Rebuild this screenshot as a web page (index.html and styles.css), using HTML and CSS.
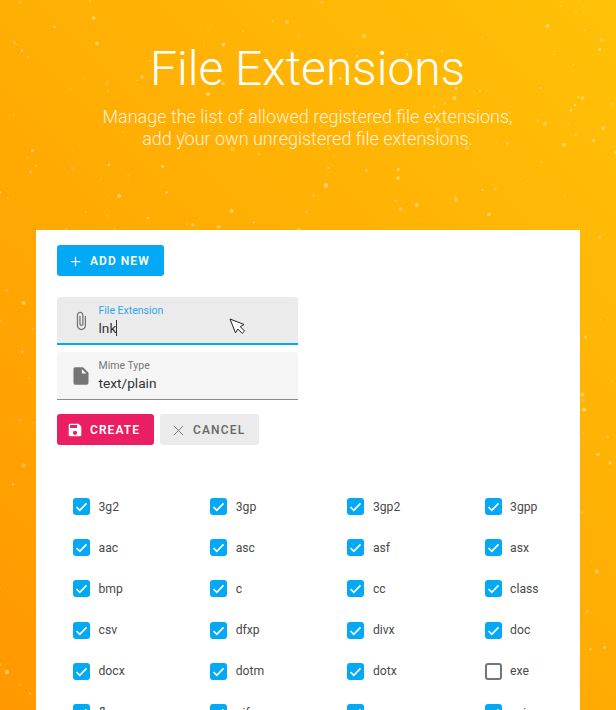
FILE: index.html
```html
<!DOCTYPE html>
<html lang="en">
<head>
<meta charset="utf-8">
<title>File Extensions</title>
<link rel="stylesheet" href="styles.css">
</head>
<body>
<svg class="specks" id="specks" viewBox="0 0 616 710" aria-hidden="true"></svg>
<header class="hero">
  <h1>File Extensions</h1>
  <p>Manage the list of allowed registered file extensions,<br>add your own unregistered file extensions.</p>
</header>
<main class="panel">
  <button class="btn btn-add"><svg viewBox="0 0 24 24"><path d="M19.500 13h-6.500v6.500h-2v-6.500H4.500v-2h6.500V4.500h2v6.500h6.500v2z"/></svg>ADD NEW</button>
  <div class="field focused">
    <svg viewBox="0 0 24 24"><path d="M16.500 6v11.500c0 2.210-1.790 4-4 4s-4-1.790-4-4V5a2.500 2.500 0 0 1 5 0v10.500c0 .55-.45 1-1 1s-1-.45-1-1V6H10v9.500a2.500 2.500 0 0 0 5 0V5c0-2.210-1.790-4-4-4S7 2.790 7 5v12.500c0 3.040 2.460 5.500 5.500 5.500s5.500-2.460 5.500-5.500V6h-1.500z"/></svg>
    <div class="field-text"><span class="label">File Extension</span><span class="value">lnk<i class="caret"></i></span></div>
    <svg class="pointer" viewBox="0 0 17 17"><path d="M1 1 L15 6.500 L11.200 8.600 L15.600 13 L13.200 15.400 L8.800 11 L6.500 14.800 Z"/></svg>
  </div>
  <div class="field">
    <svg viewBox="0 0 24 24"><path d="M13 9V3.500L18.500 9M5 1.500c-1.110 0-2 .89-2 2v17a2 2 0 0 0 2 2h14a2 2 0 0 0 2-2V8l-6.500-6.500H5z" fill-rule="evenodd"/></svg>
    <div class="field-text"><span class="label">Mime Type</span><span class="value">text/plain</span></div>
  </div>
  <div class="actions">
    <button class="btn btn-create"><svg viewBox="2 2 20 20"><path d="M15 9H5V5h10m-3 14a3 3 0 0 1-3-3 3 3 0 0 1 3-3 3 3 0 0 1 3 3 3 3 0 0 1-3 3m5-16H5a2 2 0 0 0-2 2v14a2 2 0 0 0 2 2h14a2 2 0 0 0 2-2V7l-4-4z"/></svg>CREATE</button>
    <button class="btn btn-cancel"><svg viewBox="0 0 24 24"><path d="M5 5l14 14M19 5l-14 14"/></svg>CANCEL</button>
  </div>
  <div class="extensions" id="extensions"></div>
</main>
<script src="app.js"></script>
</body>
</html>
```
FILE: styles.css
```css
* { box-sizing: border-box; }
html, body { height: 100%; }
body {
  margin: 0;
  height: 710px;
  overflow: hidden;
  position: relative;
  display: flex;
  flex-direction: column;
  font-family: Roboto, "Liberation Sans", sans-serif;
  background: linear-gradient(45deg, #ff9800, #ffc107);
}
.specks { position: absolute; left: 0; top: 0; width: 616px; height: 710px; fill: #fff; }
.hero { position: relative; height: 230px; flex: none; padding: 41px 1px 0 0; text-align: center; color: #fff; }
.hero h1 { margin: 0; font-size: 48px; line-height: 56px; font-weight: 300; }
.hero p { margin: 9px 0 0; font-size: 18px; line-height: 22px; font-weight: 300; color: rgba(255, 255, 255, .86); }
.panel { position: relative; flex: none; width: 544px; height: 500px; margin: 0 auto; padding: 15px 21px 0; background: #fff; }
.btn {
  display: inline-flex;
  align-items: center;
  height: 31px;
  margin: 0;
  border: 0;
  border-radius: 3px;
  padding: 1px 0 0 11px;
  font: 600 12px/30px Roboto, "Liberation Sans", sans-serif;
  letter-spacing: 1.050px;
  color: #fff;
}
.btn svg { width: 15px; height: 15px; margin-right: 7px; fill: currentColor; }
.btn-add { display: flex; width: 107px; background: #03a9f4; }
.btn-create { width: 97px; background: #e91e63; }
.btn-create svg { width: 14px; height: 14px; margin-right: 8px; }
.btn-cancel { width: 99px; background: #ebebeb; color: #666; font-weight: 500; letter-spacing: 1.150px; }
.btn-cancel svg { fill: none; stroke: #777; stroke-width: 1.600; }
.field {
  position: relative;
  display: flex;
  width: 241px;
  height: 49px;
  margin-top: 6px;
  padding-left: 14px;
  background: #f5f5f5;
  border-bottom: 1px solid #8a8a8a;
  border-radius: 3px 3px 0 0;
}
.field.focused { height: 48px; margin-top: 21px; margin-bottom: 7px; background: #ebebeb; border-bottom: 2px solid #03a9f4; }
.field.focused + .field { margin-top: 0; height: 48px; }
.field > svg { width: 20px; height: 20px; margin: 14px 7.500px 0 0; fill: #757575; }
.field-text { display: flex; flex-direction: column; padding-top: 7px; }
.label { font-size: 10.500px; line-height: 14px; color: #757575; }
.focused .label { color: #2ba6ee; }
.value { display: flex; font-size: 13.700px; line-height: 21px; color: #333; }
.caret { width: 1px; height: 16px; margin-top: 2px; background: #333; }
.field > svg.pointer { position: absolute; left: 172px; top: 21px; width: 17px; height: 17px; margin: 0; fill: #fff; stroke: #222; stroke-width: 1; }
.actions { display: flex; gap: 6px; margin-top: 14px; }
.extensions { display: grid; grid-template-columns: repeat(4, 137.200px); grid-auto-rows: 41.200px; margin: 41px 0 0 16px; }
.ext { display: flex; align-items: center; font-size: 12.200px; color: #4a4a4a; }
.box { width: 17px; height: 17px; margin-right: 8.500px; border-radius: 3px; background: #03a9f4; }
.box svg { display: block; width: 17px; height: 17px; fill: none; stroke: #fff; stroke-width: 1.700; }
.box.off { background: #fff; border: 2px solid #757575; }
```
FILE: app.js
```js
const rows = [
  ['3g2', '3gp', '3gp2', '3gpp'],
  ['aac', 'asc', 'asf', 'asx'],
  ['bmp', 'c', 'cc', 'class'],
  ['csv', 'dfxp', 'divx', 'doc'],
  ['docx', 'dotm', 'dotx', 'exe'],
  ['flv', 'gif', 'gz', 'gzip']
];
const tick = '<svg viewBox="0 0 17 17"><path d="M3.500 9l3.300 3.300L13.500 5.400"/></svg>';
document.getElementById('extensions').innerHTML = rows.flat().map(name =>
  `<div class="ext"><span class="box${name === 'exe' ? ' off' : ''}">${name === 'exe' ? '' : tick}</span>${name}</div>`).join('');

// Background specks: x, y, radius, opacity
const specks = [
  [20,2,2,.15],[90,1.5,1.5,.25],[93.5,18,2,.5],[54.5,27,1.3,.5],[97,43.500,2,.5],[14.5,42.500,1.5,.4],[17,44.500,1,.3],[22,50.500,1.4,.5],[28,57,1.2,.4],
  [209,29.500,1.800,.15],[243,31,1,.3],[273,21,1.2,.3],[287,22,2,.4],[299,35.500,2,.2],[223.500,44.500,2,.5],[204,45,1.2,.2],[291,51,1.5,.4],[150,60.500,1,.5],
  [142,77,2.100,.35],[137.500,80.500,.8,.5],[107.500,83,2,.2],[108,91,1,.3],[70,88.500,1,.15],[84.500,78.500,.8,.25],[223,83.500,1.800,.5],[208,94,2.100,.5],[14,114.500,1,.3],[33,103.500,.8,.2],
  [32.500,150.500,1.500,.5],[27,157.500,.8,.4],[36,166,1.200,.35],[30.500,172,1.400,.4],[72.500,168.500,2,.25],[73.500,150.500,1.300,.15],[109,165,1.300,.6],[128.500,175.500,1.700,.25],[162.500,166.500,1.400,.6],
  [101,179,1,.4],[119,196,2.100,.6],[111.500,193,1.300,.2],[166.500,192.500,1.300,.6],[0,192.500,1.400,.5],[8,198.500,1,.4],[86,212,1,.3],[107,215.500,1.200,.3],[148,218,1.200,.5],[231.500,211,2,.5],
  [253.500,222.500,1.200,.4],[192.800,224.500,1.500,.6],[187,224,1.200,.4],[218.500,227,2.100,.4],[115,229,1.800,.15],[66,229.500,1.200,.4],[306.500,211.500,1.500,.4],[298.500,229,1.500,.4],[185,133.500,2,.3],[232.500,149,2.200,.3],[259,154,1,.3],[122.500,132,1,.25],
  [322,2.500,1.400,.4],[364,36,2.200,.4],[416,34,.8,.25],[435,43.500,.8,.25],[442,51,1.200,.25],[407,54.500,1.200,.4],[357,56,1.300,.4],[482,37.500,1.500,.15],[561,6,1.200,.2],[583,5.500,1.300,.2],[576,12,1,.25],[547.500,26,1.900,.5],[585,30,1.500,.25],[601.500,40,2.100,.3],[599.500,49.500,1.700,.4],[554,54.500,.8,.5],[573.500,64.500,1,.4],
  [540.500,88,1.100,.55],[480,91,1.100,.5],[456,88.500,1.400,.5],[454.500,98,2,.55],[445,103,1.500,.3],[340.500,78.500,1.700,.5],[582.500,98,2,.45],[578,97,1.200,.4],[575,105,1.200,.6],[571,110.500,1.500,.4],[612,104.500,2,.2],[434,106.500,1.500,.25],[510,112.500,1.800,.25],[538,120.500,1.200,.4],[545,123.500,2.200,.35],[568.500,124,1,.25],[603.500,128,1.900,.45],[575.500,134.500,1.600,.25],[593.500,140.500,1.900,.4],[507.500,143.500,1.700,.4],[564,144.800,2,.45],[496.500,142.500,.8,.3],[615,152.500,1.300,.5],[437.500,129.500,2.200,.4],[467,148,2.200,.3],[354.500,127.500,1,.3],[321,127,1.700,.2],
  [329,148.500,1.400,.3],[334,156.500,.8,.4],[328.500,168,1.300,.4],[366.500,170.500,1.400,.4],[398.500,169.500,1.800,.45],[398,178,1.700,.55],[326,185.500,2.200,.6],[313.500,195.500,1.600,.3],[541.500,162,1.500,.25],[520.500,179.500,.8,.4],[482.500,190,1,.5],[495,189,2,.2],[564.500,195.500,1,.4],[455.500,198.500,2.100,.25],[456.500,200.500,1.900,.3],[395.500,201,1.200,.5],[416.500,205,2,.45],[400.500,209,2,.35],[489,214.500,1.800,.6],[418,220.500,.8,.3],[470,187,1,.15],
  [7,290.500,1.700,.25],[23.500,303,2,.5],[0,321,1.500,.4],[33,329,1.200,.35],[22,352,1.400,.55],[17.500,338,1,.15],[29,378,1,.2],[20,420.500,1.900,.25],[33.500,422.500,1,.3],[23.500,465.500,2.300,.3],[13,484.500,1.200,.5],[0,588,1.400,.2],[0,664.500,1.600,.35],[7,672,2.200,.6],[20,685,1.300,.3],[30,693.500,1.200,.45],
  [600,237,2,.25],[600.500,320,1,.35],[585.500,337,1.400,.5],[612.500,381,1,.3],[582.500,394.500,2,.45],[582.500,400.500,1.700,.25],[584,409.500,2,.6],[583.500,433,1,.35],[607.500,437,1.500,.4],[602.500,439,1,.35],[598,454.500,1.700,.5],[610,463,1.500,.6],[582,512.500,1.200,.35],[591.500,561.500,.8,.3],[597,571.500,1.900,.5],[587.500,611.500,1.900,.25],[590.500,649,1.200,.6],[604.500,643.500,.8,.4],[604.500,647.500,1.400,.55]
];
document.getElementById('specks').innerHTML = specks.map(([x, y, r, o]) =>
  `<circle cx="${x}" cy="${y}" r="${r}" opacity="${(o * .7).toFixed(2)}"/>`).join('');
```
